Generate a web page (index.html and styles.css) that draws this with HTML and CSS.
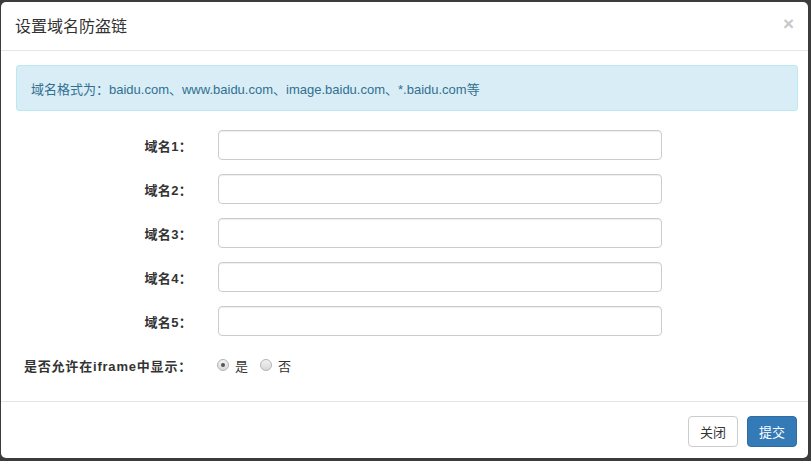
FILE: index.html
```html
<!DOCTYPE html>
<html lang="zh-CN">
<head>
    <meta charset="utf-8">
    <title>设置域名防盗链</title>
    <link rel="stylesheet" href="styles.css">
</head>
<body>
    <div class="modal">
        <div class="modal-header">
            <h4 class="modal-title">设置域名防盗链</h4>
            <span class="close">&times;</span>
        </div>
        <div class="modal-body">
            <div class="alert">域名格式为：baidu.com、www.baidu.com、image.baidu.com、*.baidu.com等</div>
            <form class="form">
                <div class="form-row">
                    <label>域名1：</label>
                    <input type="text">
                </div>
                <div class="form-row">
                    <label>域名2：</label>
                    <input type="text">
                </div>
                <div class="form-row">
                    <label>域名3：</label>
                    <input type="text">
                </div>
                <div class="form-row">
                    <label>域名4：</label>
                    <input type="text">
                </div>
                <div class="form-row">
                    <label>域名5：</label>
                    <input type="text">
                </div>
                <div class="form-row">
                    <label class="label-wide">是否允许在iframe中显示：</label>
                    <div class="radios">
                        <span class="radio checked"></span><span class="radio-text">是</span>
                        <span class="radio"></span><span class="radio-text">否</span>
                    </div>
                </div>
            </form>
        </div>
        <div class="modal-footer">
            <button type="button" class="btn">关闭</button>
            <button type="button" class="btn btn-primary">提交</button>
        </div>
    </div>
</body>
</html>
```

FILE: styles.css
```css
* { margin: 0; padding: 0; box-sizing: border-box; }
body {
    background: #3c3c3c;
    font-family: "Liberation Sans", Arial, "Noto Sans CJK SC", sans-serif;
    font-size: 13px; color: #333;
    height: 461px; overflow: hidden;
    padding: 2px 3px 3px 1px;
}
.modal {
    width: 807px; height: 456px; background: #fff;
    border-radius: 5px; display: flex; flex-direction: column;
}
.modal-header {
    height: 49px; border-bottom: 1px solid #e5e5e5;
    display: flex; justify-content: space-between; align-items: center;
    padding: 0 14px 2px 14px;
}
.modal-title {
    font-size: 16px; font-weight: normal; color: #333;
    font-family: "Noto Sans CJK SC", sans-serif;
}
.close {
    font-size: 19px; font-weight: bold; color: #c8c8c8;
    line-height: 1; margin-top: -4px;
}
.modal-body {
    padding: 14px 10px 21px 15px;
    flex: 1;
}
.alert {
    height: 46px; background: #d9edf7; border: 1px solid #bce8f1;
    border-radius: 3px; color: #31708f;
    padding: 0 14px; display: flex; align-items: center;
}
.form { display: flex; flex-direction: column; gap: 14px; margin-top: 19px; }
.form-row {
    display: grid; grid-template-columns: 176px 444px; column-gap: 26px;
    align-items: center; height: 30px;
}
.form-row label {
    text-align: right; font-weight: bold; color: #333;
    letter-spacing: 0.3px;
}
.form-row .label-wide { letter-spacing: 0.8px; }
.form-row input {
    height: 30px; border: 1px solid #ccc; border-radius: 4px;
    box-shadow: inset 0 1px 1px rgba(0,0,0,.075); outline: none;
}
.radios { display: flex; align-items: center; }
.radio {
    width: 12px; height: 12px; border-radius: 50%;
    border: 1px solid #b4b4b4;
    background: linear-gradient(#f2f2f2, #d8d8d8);
    margin-left: -1px; position: relative;
}
.radio.checked::after {
    content: ""; position: absolute; left: 3px; top: 3px;
    width: 4px; height: 4px; border-radius: 50%; background: #555;
}
.radio-text { margin: 0 13px 0 6px; font-family: "Noto Sans CJK SC", sans-serif; }
.modal-footer {
    border-top: 1px solid #e5e5e5; height: 57px;
    display: flex; justify-content: flex-end; align-items: flex-start;
    gap: 9px; padding: 14px 11px 0 0;
}
.btn {
    height: 31px; padding: 0 11px; border: 1px solid #ccc; border-radius: 4px;
    background: #fff; color: #333; font-size: 13px;
    font-family: "Noto Sans CJK SC", sans-serif; cursor: pointer;
}
.btn-primary { background: #337ab7; border-color: #2e6da4; color: #fff; }
```
